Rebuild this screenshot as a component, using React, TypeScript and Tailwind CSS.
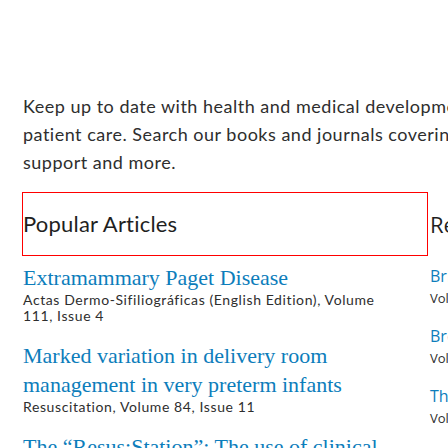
const popular = [
  {
    title: "Extramammary Paget Disease",
    source: "Actas Dermo-Sifiliográficas (English Edition), Volume 111, Issue 4",
  },
  {
    title: "Marked variation in delivery room management in very preterm infants",
    source: "Resuscitation, Volume 84, Issue 11",
  },
  {
    title: "The “Resus:Station”: The use of clinical decision support in neonatal resuscitation",
    source: "Resuscitation, Volume 85, Issue 3",
  },
];

const recent = [
  { title: "Bringing evidence into practice", source: "Volume 12, Issue 2" },
  { title: "Breast cancer screening update", source: "Volume 45, Issue 1" },
  { title: "The role of nursing in care", source: "Volume 30, Issue 6" },
];

export default function App() {
  return (
    <div className="w-[448px] h-[448px] overflow-hidden bg-white">
      <div className="w-[900px] pl-[23px] pt-[92px]">
        {/* intro */}
        <p
          className="text-[18px] leading-[28px] tracking-[0.5px] text-[#2e2e2e] whitespace-nowrap"
          style={{ fontFamily: "Lato, sans-serif" }}
        >
          Keep up to date with health and medical developments to stimulate research and improve
          <br />
          patient care. Search our books and journals covering education, reference information, decision
          <br />
          support and more.
        </p>

        <div className="flex mt-4 -ml-px">
          {/* popular articles */}
          <div className="w-[406px] shrink-0">
            <h2
              className="border border-[#ff0000] py-4 text-[22px] leading-[30px] tracking-[0.2px] text-[#1f1f1f] font-normal"
              style={{ fontFamily: "Lato, sans-serif" }}
            >
              Popular Articles
            </h2>
            <ul className="mt-[7px] pl-px pr-[28px]">
              {popular.map((a) => (
                <li key={a.title} className="mb-[17px]">
                  <a
                    href="#"
                    className="block text-[22px] leading-[29px] text-[#0c7dbb]"
                    style={{ fontFamily: '"Liberation Serif", serif' }}
                  >
                    {a.title}
                  </a>
                  <p
                    className="text-[14px] leading-[16px] tracking-[0.6px] text-[#2e2e2e]"
                    style={{ fontFamily: "Lato, sans-serif" }}
                  >
                    {a.source}
                  </p>
                </li>
              ))}
            </ul>
          </div>

          {/* recent articles */}
          <div className="w-[400px] shrink-0 pl-[2px]" style={{ fontFamily: '"Open Sans", sans-serif' }}>
            <h2 className="py-[17px] text-[22px] leading-[30px] text-[#1f1f1f] font-normal">
              Recent Articles
            </h2>
            <ul className="mt-[8px]">
              {recent.map((a) => (
                <li key={a.title} className="mb-4">
                  <a href="#" className="block text-[16px] leading-[24px] text-[#0c7dbb]">
                    {a.title}
                  </a>
                  <p className="text-[13px] leading-[20px] text-[#2e2e2e]">{a.source}</p>
                </li>
              ))}
            </ul>
          </div>
        </div>
      </div>
    </div>
  );
}
